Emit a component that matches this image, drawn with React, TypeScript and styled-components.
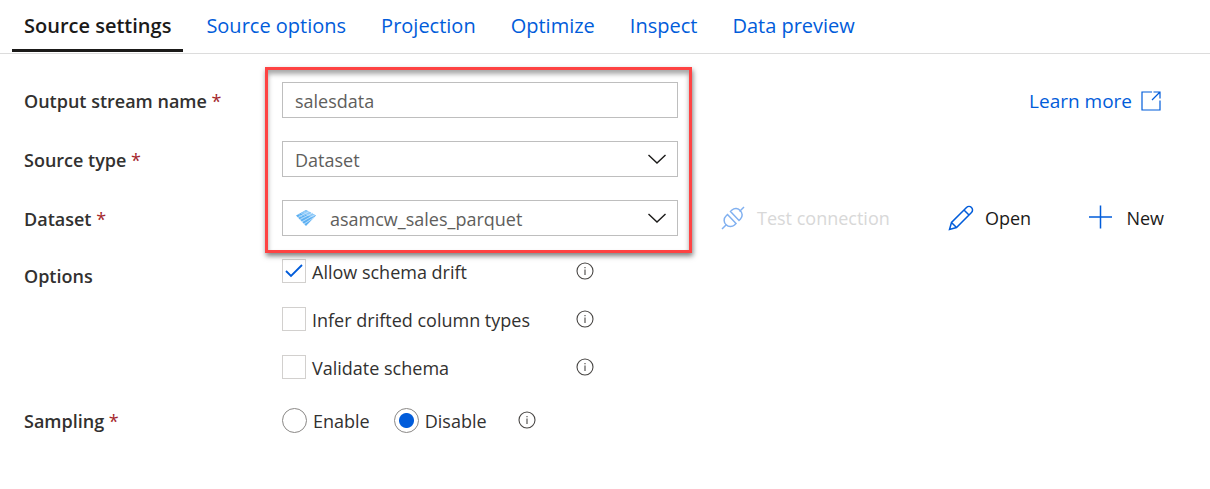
import React from "react";
import styled, { createGlobalStyle, css } from "styled-components";

const blue = "#015cda";

const GlobalStyle = createGlobalStyle`
  *, *::before, *::after { box-sizing: border-box; }
  body { margin: 0; background: #fff; }
  body, button, input, select {
    font-family: "Open Sans", "Noto Sans", sans-serif;
    font-size: 18px;
    line-height: 24px;
  }
`;

const Page = styled.main`
  min-width: 1180px;
  color: #323130;
`;

const Tabs = styled.nav`
  display: flex;
  gap: 11px;
  padding: 0 12px;
  border-bottom: 1px solid #dcdcdc;
`;

const Tab = styled.button<{ $active?: boolean }>`
  height: 53px;
  padding: 0 12px 2px;
  border: 0;
  background: none;
  color: ${blue};
  font-size: 20px;
  ${(p) =>
    p.$active &&
    css`
      color: #1b1a19;
      font-weight: 600;
      box-shadow: inset 0 -1px #fff, inset 0 -4px #1b1a19;
    `}
`;

const Form = styled.form`
  position: relative;
  display: flex;
  flex-direction: column;
  gap: 23px;
  padding: 28px 46px 0 24px;
`;

const Row = styled.div`
  display: flex;
  align-items: center;
  min-height: 36px;
`;

const Label = styled.label`
  width: 258px;
  flex: none;
  padding-top: 2px;
  font-weight: 600;
`;

const Star = styled.span`
  color: #a4262c;
  font-weight: 400;
`;

const Field = styled.div`
  position: relative;
  display: flex;
  align-items: center;
  width: 396px;
  flex: none;
`;

const controlStyle = css`
  width: 100%;
  height: 36px;
  margin: 0;
  padding: 1px 12px 0;
  border: 1px solid #bebebe;
  border-radius: 0;
  background: #fff;
  color: #605e5c;
  outline: 0;
`;

const TextBox = styled.input`
  ${controlStyle}
`;

const Select = styled.select<{ $icon?: boolean }>`
  ${controlStyle}
  appearance: none;
  padding-left: ${(p) => (p.$icon ? 47 : 12)}px;
`;

const Chevron = styled.svg`
  position: absolute;
  right: 11px;
  pointer-events: none;
`;

const ParquetIcon = styled.svg`
  position: absolute;
  left: 14px;
  pointer-events: none;
`;

const LearnMore = styled.a`
  display: flex;
  align-items: center;
  gap: 9px;
  margin-left: auto;
  padding: 2px 3px 0 0;
  color: ${blue};
  font-size: 19px;
  text-decoration: none;
`;

const Actions = styled.div`
  display: flex;
  flex: 1;
  justify-content: space-between;
  padding-left: 42px;
`;

const Action = styled.button`
  display: flex;
  align-items: center;
  gap: 11px;
  padding: 0;
  border: 0;
  background: none;
  color: #1b1a19;
  &:disabled { color: #d8d8d8; }
`;

const Highlight = styled.div`
  position: absolute;
  z-index: 1;
  top: 13px;
  left: 265px;
  width: 427px;
  height: 186px;
  border: 3px solid #fe4343;
  box-shadow: 1px 3px 5px rgba(0, 0, 0, 0.5), inset 0 4px 5px rgba(0, 0, 0, 0.35);
  pointer-events: none;
`;

const OptionGroup = styled.fieldset`
  display: flex;
  align-items: flex-start;
  margin: 0;
  padding: 0;
  border: 0;
`;

const GroupName = styled(Label).attrs({ as: "span" })`
  padding-top: 5px;
`;

const OptionList = styled.div`
  display: flex;
  flex-direction: column;
  gap: 24px;
  width: 312px;
`;

const OptionRow = styled.div`
  display: flex;
  justify-content: space-between;
  align-items: center;
`;

const Choice = styled.label`
  display: flex;
  align-items: center;
  gap: 6px;
`;

const ChoiceText = styled.span`
  padding-top: 2px;
  line-height: 22px;
`;

const CheckBox = styled.input.attrs({ type: "checkbox" })`
  appearance: none;
  width: 24px;
  height: 24px;
  margin: 0;
  border: 1px solid #d2d0ce;
  background: #fff;
  &:checked {
    background: url("data:image/svg+xml,%3Csvg xmlns='http://www.w3.org/2000/svg' width='22' height='22' fill='none' stroke='%23015cda' stroke-width='1.8'%3E%3Cpath d='M3 11l5 5L19 5'/%3E%3C/svg%3E") center no-repeat;
  }
`;

const Radios = styled.div`
  display: flex;
  align-items: center;
  gap: 24px;
  margin-right: 31px;
`;

const RadioButton = styled.input.attrs({ type: "radio" })`
  appearance: none;
  width: 25px;
  height: 25px;
  margin: 0;
  border: 1px solid #8a8886;
  border-radius: 50%;
  background: #fff;
  &:checked { background: radial-gradient(circle, ${blue} 7px, #fff 8px); }
`;

const InfoButton = styled.button`
  display: flex;
  padding: 0;
  border: 0;
  background: none;
`;

const Info = ({ about }: { about: string }) => (
  <InfoButton type="button" aria-label={about}>
    <svg width="18" height="18" fill="none" stroke="#484644">
      <circle cx="9" cy="9" r="8" strokeWidth="1.1" />
      <path d="M9 7.5v5.500M9 5v1.300" strokeWidth="1.1" />
    </svg>
  </InfoButton>
);

const Arrow = () => (
  <Chevron width="20" height="12" fill="none" stroke="#1b1a19" strokeWidth="1.4">
    <path d="M1.500 2l8.500 8 8.500-8" />
  </Chevron>
);

const tabs = ["Source settings", "Source options", "Projection", "Optimize", "Inspect", "Data preview"];
const options = ["Allow schema drift", "Infer drifted column types", "Validate schema"];

export default function App() {
  return (
    <Page>
      <GlobalStyle />
      <Tabs>
        {tabs.map((name, i) => (
          <Tab key={name} type="button" $active={i === 0}>{name}</Tab>
        ))}
      </Tabs>
      <Form>
        <Highlight />
        <Row>
          <Label htmlFor="stream">Output stream name <Star>*</Star></Label>
          <Field><TextBox id="stream" defaultValue="salesdata" /></Field>
          <LearnMore href="#learn">
            Learn more
            <svg width="20" height="20" fill="none" stroke={blue} strokeWidth="1.2">
              <path d="M11 1H1v18h18V9.500M12.500 1H19v6.500M19 1l-8 8" />
            </svg>
          </LearnMore>
        </Row>
        <Row>
          <Label htmlFor="type">Source type <Star>*</Star></Label>
          <Field>
            <Select id="type"><option>Dataset</option></Select>
            <Arrow />
          </Field>
        </Row>
        <Row>
          <Label htmlFor="dataset">Dataset <Star>*</Star></Label>
          <Field>
            <Select id="dataset" $icon><option>asamcw_sales_parquet</option></Select>
            <ParquetIcon width="20" height="16">
              <path d="M10 0l10 5.500L10 16 0 5.500z" fill="#5db0f2" />
              <path d="M10 0l10 5.500-4 2L5 3z" fill="#8cc8f8" />
              <path d="M2 7.500L13 1.500M4 9.500l12.500-6.500M6 11.700L19 4.500M8 14l10-6.500" stroke="#d3eafd" strokeWidth=".8" />
              <path d="M5 3l5 4M2.500 4.200l4 3.300M7.500 1.500l5 4" stroke="#b5dcfb" strokeWidth=".7" />
            </ParquetIcon>
            <Arrow />
          </Field>
          <Actions>
            <Action type="button" disabled>
              <svg width="26" height="26" fill="none" stroke="#80b0f0" strokeWidth="1.5">
                <path d="M2 24l4.500-4.500M19.500 6.500L24 2M7.500 9.500l8.500 9-1.500 1.500a5.800 5.800 0 0 1-8.300-.3 5.800 5.800 0 0 1-.2-8.700zM10.500 6.500l8.500 9 1.500-1.500a5.800 5.800 0 0 0-.2-8.300 5.800 5.800 0 0 0-8.300-.7z" />
              </svg>
              Test connection
            </Action>
            <Action type="button">
              <svg width="26" height="26" fill="none" stroke={blue} strokeWidth="1.5">
                <path d="M1.500 24.500l2-7L18.500 2.500a3.500 3.500 0 0 1 5 5L8.500 22.500zM3.500 17.500l5 5M16 5l5 5" />
              </svg>
              Open
            </Action>
            <Action type="button">
              <svg width="26" height="26" fill="none" stroke={blue} strokeWidth="1.5">
                <path d="M11.500 .5v23M0 12h23" />
              </svg>
              New
            </Action>
          </Actions>
        </Row>
        <OptionGroup aria-label="Options">
          <GroupName>Options</GroupName>
          <OptionList>
            {options.map((name, i) => (
              <OptionRow key={name}>
                <Choice><CheckBox defaultChecked={i === 0} /><ChoiceText>{name}</ChoiceText></Choice>
                <Info about={`About ${name}`} />
              </OptionRow>
            ))}
          </OptionList>
        </OptionGroup>
        <Row role="radiogroup" aria-label="Sampling">
          <Label as="span">Sampling <Star>*</Star></Label>
          <Radios>
            <Choice><RadioButton name="sampling" /><ChoiceText>Enable</ChoiceText></Choice>
            <Choice><RadioButton name="sampling" defaultChecked /><ChoiceText>Disable</ChoiceText></Choice>
          </Radios>
          <Info about="About sampling" />
        </Row>
      </Form>
    </Page>
  );
}
